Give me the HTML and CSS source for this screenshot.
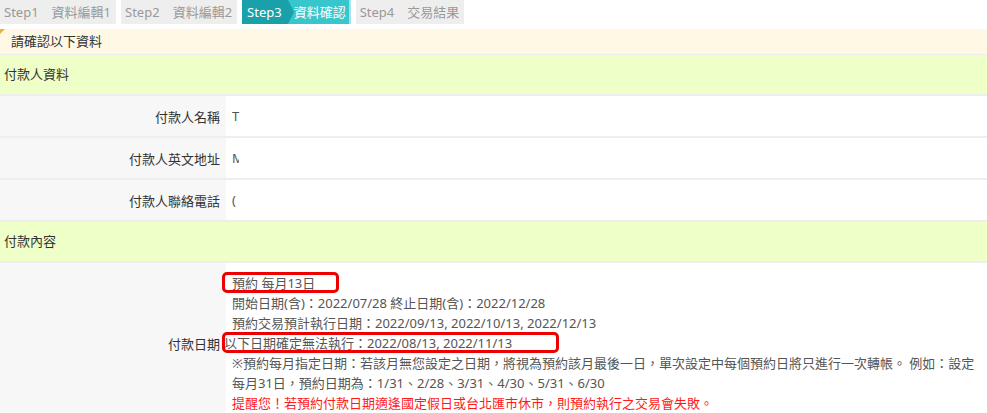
FILE: index.html
```html
<!DOCTYPE html>
<html lang="zh-Hant">
<head>
    <meta charset="UTF-8">
    <meta name="viewport" content="width=device-width, initial-scale=1.0">
    <title>資料確認</title>
    <link rel="stylesheet" href="styles.css">
</head>
<body>
    <div class="steps">
        <div class="step"><span class="num">Step1</span><span class="name">資料編輯1</span></div>
        <div class="step"><span class="num">Step2</span><span class="name">資料編輯2</span></div>
        <div class="step active"><span class="num">Step3</span><span class="name">資料確認</span></div>
        <div class="step"><span class="num">Step4</span><span class="name">交易結果</span></div>
    </div>

    <div class="notice">請確認以下資料</div>

    <div class="form">
        <div class="section">付款人資料</div>

        <div class="label">付款人名稱</div>
        <div class="value">T</div>

        <div class="label">付款人英文地址</div>
        <div class="value"><span class="masked">M</span></div>

        <div class="label">付款人聯絡電話</div>
        <div class="value"><span class="masked">(</span></div>

        <div class="section">付款內容</div>

        <div class="label">付款日期</div>
        <div class="value lines">
            <div><span class="mark mark-first">預約 每月13日</span></div>
            <div>開始日期(含)：2022/07/28 終止日期(含)：2022/12/28</div>
            <div>預約交易預計執行日期：2022/09/13, 2022/10/13, 2022/12/13</div>
            <div class="outdent"><span class="mark mark-second">以下日期確定無法執行：2022/08/13, 2022/11/13</span></div>
            <div>※預約每月指定日期：若該月無您設定之日期，將視為預約該月最後一日，單次設定中每個預約日將只進行一次轉帳。 例如：設定每月31日，預約日期為：1/31、2/28、3/31、4/30、5/31、6/30</div>
            <div class="warn">提醒您！若預約付款日期適逢國定假日或台北匯市休市，則預約執行之交易會失敗。</div>
        </div>
    </div>
</body>
</html>
```

FILE: styles.css
```css
body {
    margin: 0;
    font-family: "Noto Sans", "Noto Sans CJK TC", sans-serif;
    font-size: 13px;
    color: #333;
    background-color: #fff;
}

/* step bar */
.steps {
    display: flex;
    gap: 5px;
    height: 24px;
    line-height: 24px;
}
.step {
    display: flex;
    background-color: #eeeeee;
    color: #999;
    padding: 0 5px 0 4px;
}
.step .num {
    margin-right: 13px;
}
.step.active {
    background-color: #38c6cd;
    color: #fff;
    padding: 0 3px 0 0;
    border-right: 2px solid #a6e3e6;
}
.step.active .num {
    position: relative;
    background-color: #1aa0a8;
    padding: 0 6px 0 5px;
    margin-right: 6px;
}
.step.active .num::after {
    content: "";
    position: absolute;
    left: 100%;
    top: 0;
    border-top: 12px solid transparent;
    border-bottom: 12px solid transparent;
    border-left: 6px solid #1aa0a8;
}

/* notice */
.notice {
    position: relative;
    margin-top: 5px;
    height: 25px;
    line-height: 25px;
    padding-left: 11px;
    background-color: #fff8e5;
    border-bottom: 1px solid #eeeeee;
}
.notice::before {
    content: "";
    position: absolute;
    left: 0;
    top: 0;
    border-top: 5px solid #f0b040;
    border-right: 5px solid transparent;
}

/* form table */
.form {
    display: grid;
    grid-template-columns: 226px 1fr;
    row-gap: 2px;
    background-color: #eeeeee;
}
.section {
    grid-column: 1 / -1;
    height: 39px;
    line-height: 39px;
    padding-left: 4px;
    background-color: #eeffc8;
}
.label {
    display: flex;
    align-items: center;
    justify-content: flex-end;
    padding-right: 6px;
    min-height: 40px;
    background-color: #f7f7f7;
}
.value {
    display: flex;
    align-items: center;
    padding-left: 6px;
    min-height: 40px;
    background-color: #fff;
    color: #555;
}
.masked {
    display: inline-block;
    width: 7px;
    overflow: hidden;
}
.lines {
    display: block;
    padding: 10px 6px 10px 6px;
    line-height: 20px;
}
.outdent {
    margin-left: -8px;
}
.warn {
    color: #ff1a1a;
}

/* red annotation boxes */
.mark {
    position: relative;
}
.mark::after {
    content: "";
    position: absolute;
    top: -2px;
    bottom: -1px;
    border: 3px solid #ee0000;
    border-radius: 5px;
}
.mark-first::after {
    left: -10px;
    right: -24px;
}
.mark-second::after {
    left: -2px;
    right: -47px;
}
```
